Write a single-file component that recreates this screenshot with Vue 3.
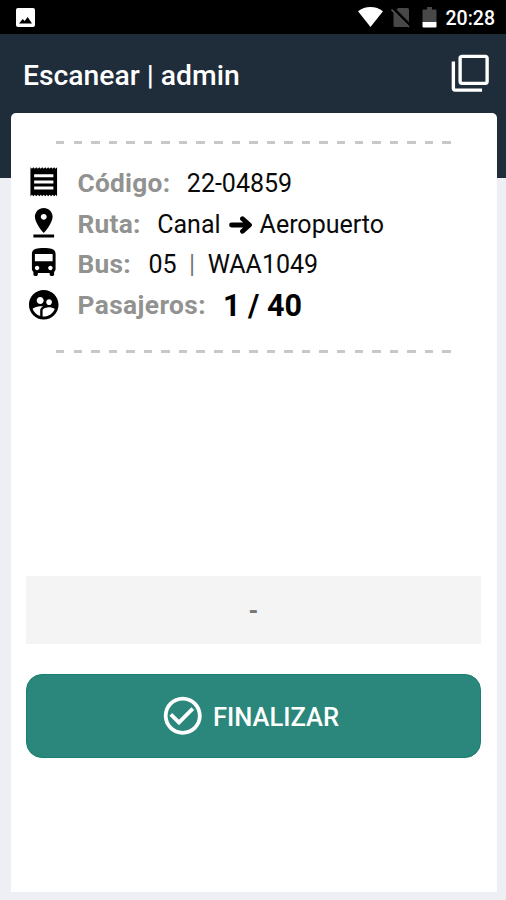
<script setup>
const rows = [
  {
    key: 'code', label: 'Código:',
    icon: 'M18.500 17.200H5.500v-2h13v2zm0-4.100H5.500v-2h13v2zm0-4.100H5.500V7h13v2zM3 21.800l1-1 1 1 1-1 1 1 1-1 1 1 1-1 1 1 1-1 1 1 1-1 1 1 1-1 1 1 1-1 1 1 1-1 1 1V2.200l-1 1-1-1-1 1-1-1-1 1-1-1-1 1-1-1-1 1-1-1-1 1-1-1-1 1-1-1-1 1-1-1-1 1-1-1z'
  },
  {
    key: 'route', label: 'Ruta:',
    icon: 'M18 8c0-3.31-2.69-6-6-6S6 4.69 6 8c0 4.5 6 11 6 11s6-6.5 6-11zm-8 0c0-1.1.9-2 2-2s2 .9 2 2-.89 2-2 2c-1.1 0-2-.9-2-2zM5 20v2h14v-2H5z'
  },
  {
    key: 'bus', label: 'Bus:',
    icon: 'M4 16c0 .88.39 1.67 1 2.22V20c0 .55.45 1 1 1h1c.55 0 1-.45 1-1v-1h8v1c0 .55.45 1 1 1h1c.55 0 1-.45 1-1v-1.78c.61-.55 1-1.34 1-2.22V6c0-3.5-3.58-4-8-4s-8 .5-8 4v10zm3.5 1c-.83 0-1.5-.67-1.5-1.5S6.67 14 7.5 14s1.5.67 1.5 1.5S8.33 17 7.5 17zm9 0c-.83 0-1.5-.67-1.5-1.5s.67-1.5 1.5-1.5 1.5.67 1.5 1.5-.67 1.5-1.5 1.5zm1.5-6H6V6h12v5z'
  },
  {
    key: 'people', label: 'Pasajeros:',
    icon: 'M11.99 2c-5.52 0-10 4.48-10 10s4.48 10 10 10 10-4.48 10-10-4.48-10-10-10zm3.61 6.34c1.07 0 1.93.86 1.93 1.93 0 1.07-.86 1.93-1.93 1.93-1.07 0-1.93-.86-1.93-1.93-.01-1.07.86-1.93 1.93-1.93zm-6-1.58c1.3 0 2.36 1.06 2.36 2.36 0 1.3-1.06 2.36-2.36 2.36s-2.36-1.06-2.36-2.36c0-1.31 1.05-2.36 2.36-2.36zm0 9.13v3.75c-2.4-.75-4.3-2.6-5.14-4.96 1.05-1.12 3.67-1.69 5.14-1.69.53 0 1.2.08 1.9.22-1.64.87-1.9 2.02-1.9 2.68zM11.99 20c-.27 0-.53-.01-.79-.04v-4.07c0-1.42 2.94-2.13 4.4-2.13 1.07 0 2.92.39 3.84 1.15-1.17 2.97-4.06 5.09-7.45 5.09z'
  }
]
</script>

<template>
  <div class="screen">
    <div class="status">
      <svg class="picture" viewBox="0 0 19 19">
        <rect width="19" height="19" rx="2" fill="#fff" />
        <path d="M3 15.5l3.7-4.6 2 2.2 3-4.1 4.3 6.5z" fill="#000" />
      </svg>
      <div class="tray">
        <svg class="wifi" viewBox="0 0 25 20">
          <path d="M12.5 20L0 4.2C3.5 1.5 7.8 0 12.5 0S21.500 1.500 25 4.200z" fill="#fff" />
        </svg>
        <svg class="sim" viewBox="0 0 20 21">
          <path d="M7 1h9.500Q18 1 18 2.500V19L17 20H4Q2.500 20 2.500 18.500V6z" fill="#484848" />
          <path d="M1.500 1.500L19 19" stroke="#000" stroke-width="4" />
          <path d="M.5 2.500L18 20" stroke="#555" stroke-width="1.700" />
        </svg>
        <svg class="battery" viewBox="0 0 15 21">
          <path d="M5 0h5v2.500h3.500q1 0 1 1V15H.5V3.500q0-1 1-1H5z" fill="#484848" />
          <path d="M.5 15h14v4.500q0 1-1 1h-12q-1 0-1-1z" fill="#fff" />
        </svg>
        <span class="time">20:28</span>
      </div>
    </div>

    <header class="header">
      <h1 class="title">Escanear | admin</h1>
      <svg class="layers" viewBox="0 0 24 24">
        <path d="M3 5H1v16c0 1.1.9 2 2 2h16v-2H3V5zm18-4H7c-1.1 0-2 .9-2 2v14c0 1.1.9 2 2 2h14c1.1 0 2-.9 2-2V3c0-1.1-.9-2-2-2zm0 16H7V3h14v14z" />
      </svg>
    </header>

    <main class="card">
      <div class="dashes"></div>
      <div class="rows">
        <div v-for="row in rows" :key="row.key" class="row" :class="row.key">
          <svg class="icon" viewBox="0 0 24 24"><path fill-rule="evenodd" :d="row.icon" /></svg>
          <span class="label">{{ row.label }}</span>
          <span v-if="row.key === 'code'" class="value">22-04859</span>
          <span v-else-if="row.key === 'route'" class="value route-value">
            <span class="from">Canal</span>
            <svg class="arrow" viewBox="0 0 23 18">
              <path d="M2.500 9h16M13.500 2.700L20.500 9l-7 6.300" />
            </svg>
            <span class="to">Aeropuerto</span>
          </span>
          <span v-else-if="row.key === 'bus'" class="value bus-value">
            <span>05</span><span class="bar">|</span><span class="plate">WAA1049</span>
          </span>
          <span v-else class="count">1 / 40</span>
        </div>
      </div>
      <div class="dashes"></div>

      <div class="result">-</div>
      <button class="finish">
        <svg class="check" viewBox="0 0 24 24">
          <path d="M12 2C6.480 2 2 6.480 2 12s4.480 10 10 10 10-4.480 10-10S17.520 2 12 2zm0 18c-4.410 0-8-3.590-8-8s3.590-8 8-8 8 3.590 8 8-3.590 8-8 8zm4.590-12.420L10 14.170l-3.590-3.580L5 12l5 5 8-8z" />
        </svg>
        <span class="finish-text">FINALIZAR</span>
      </button>
    </main>
  </div>
</template>

<style>
body {
  margin: 0;
}
</style>

<style scoped>
.screen {
  width: 506px;
  height: 900px;
  overflow: hidden;
  display: flex;
  flex-direction: column;
  background: #edeff4;
  font-family: Roboto, "Liberation Sans", sans-serif;
}
svg {
  display: block;
  flex: none;
}
.status {
  height: 34px;
  flex: none;
  box-sizing: border-box;
  padding: 0 11px 0 16px;
  display: flex;
  align-items: center;
  justify-content: space-between;
  background: #000;
}
.picture {
  width: 19px;
  height: 19px;
}
.tray {
  display: flex;
  align-items: center;
}
.wifi {
  width: 25px;
  height: 20px;
}
.sim {
  width: 20px;
  height: 21px;
  margin-left: 8px;
}
.battery {
  width: 15px;
  height: 21px;
  margin-left: 11px;
}
.time {
  margin-left: 9px;
  padding-top: 3px;
  font-size: 19.5px;
  line-height: 24px;
  font-weight: 500;
  color: #fff;
}
.header {
  height: 143.500px;
  flex: none;
  box-sizing: border-box;
  padding: 19px 15.500px 0 23px;
  display: flex;
  align-items: flex-start;
  justify-content: space-between;
  background: #1f2c3a;
}
.title {
  margin: 0;
  padding-top: 7px;
  font-size: 28.3px;
  line-height: 32px;
  font-weight: 500;
  color: #fff;
  white-space: nowrap;
}
.layers {
  width: 40.500px;
  height: 40.500px;
  fill: #fff;
}
.card {
  width: 486px;
  height: 779px;
  flex: none;
  box-sizing: border-box;
  margin: -64.500px 0 0 10.500px;
  padding: 28px 15.500px 0;
  border-radius: 5px 5px 0 0;
  background: #fff;
}
.dashes {
  width: 396px;
  height: 3px;
  margin-left: 30px;
  background: repeating-linear-gradient(90deg, #c8c8c8 0 8.500px, transparent 8.500px 17.560px);
}
.rows {
  padding: 18px 0 24px;
}
.row {
  height: 40.300px;
  display: flex;
  align-items: center;
  white-space: nowrap;
  line-height: 30px;
}
.people {
  height: 43px;
}
.icon {
  width: 35.500px;
  height: 35.500px;
  margin-left: -0.500px;
}
.label {
  margin-left: 16.500px;
  padding-top: 3px;
  font-size: 26.3px;
  letter-spacing: 0.250px;
  font-weight: 700;
  color: #929290;
}
.code .label,
.people .label {
  padding-top: 2px;
}
.people .label {
  letter-spacing: 0.400px;
}
.value {
  margin-left: 16.500px;
  padding-top: 4px;
  font-size: 25px;
  color: #0a0a0a;
}
.route-value,
.bus-value {
  display: flex;
  align-items: center;
}
.route-value {
  padding-top: 5px;
}
.bus-value {
  margin-left: 17.500px;
}
.arrow {
  width: 23px;
  height: 18px;
  margin: 0 7.500px 0 8.500px;
  fill: none;
  stroke: #000;
  stroke-width: 4.800;
  stroke-linecap: round;
  stroke-linejoin: round;
}
.bar {
  margin: 0 12.500px;
  color: #777;
}
.count {
  margin-left: 17px;
  padding-top: 3px;
  font-size: 30.5px;
  font-weight: 700;
  color: #000;
}
.result {
  height: 68px;
  margin-top: 223px;
  background: #f4f4f4;
  color: #777;
  font-size: 25px;
  font-weight: 700;
  line-height: 71px;
  text-align: center;
}
.finish {
  width: 100%;
  height: 84px;
  margin-top: 30px;
  padding: 0 8px 0 0;
  border: 1px solid #1c7e71;
  border-radius: 16px;
  background: #2b877b;
  display: flex;
  align-items: center;
  justify-content: center;
  font-family: inherit;
  color: #fff;
}
.check {
  width: 45.500px;
  height: 45.500px;
  fill: #fff;
}
.finish-text {
  margin-left: 7.500px;
  padding-top: 2px;
  font-size: 25.5px;
  font-weight: 500;
  line-height: 30px;
}
</style>
